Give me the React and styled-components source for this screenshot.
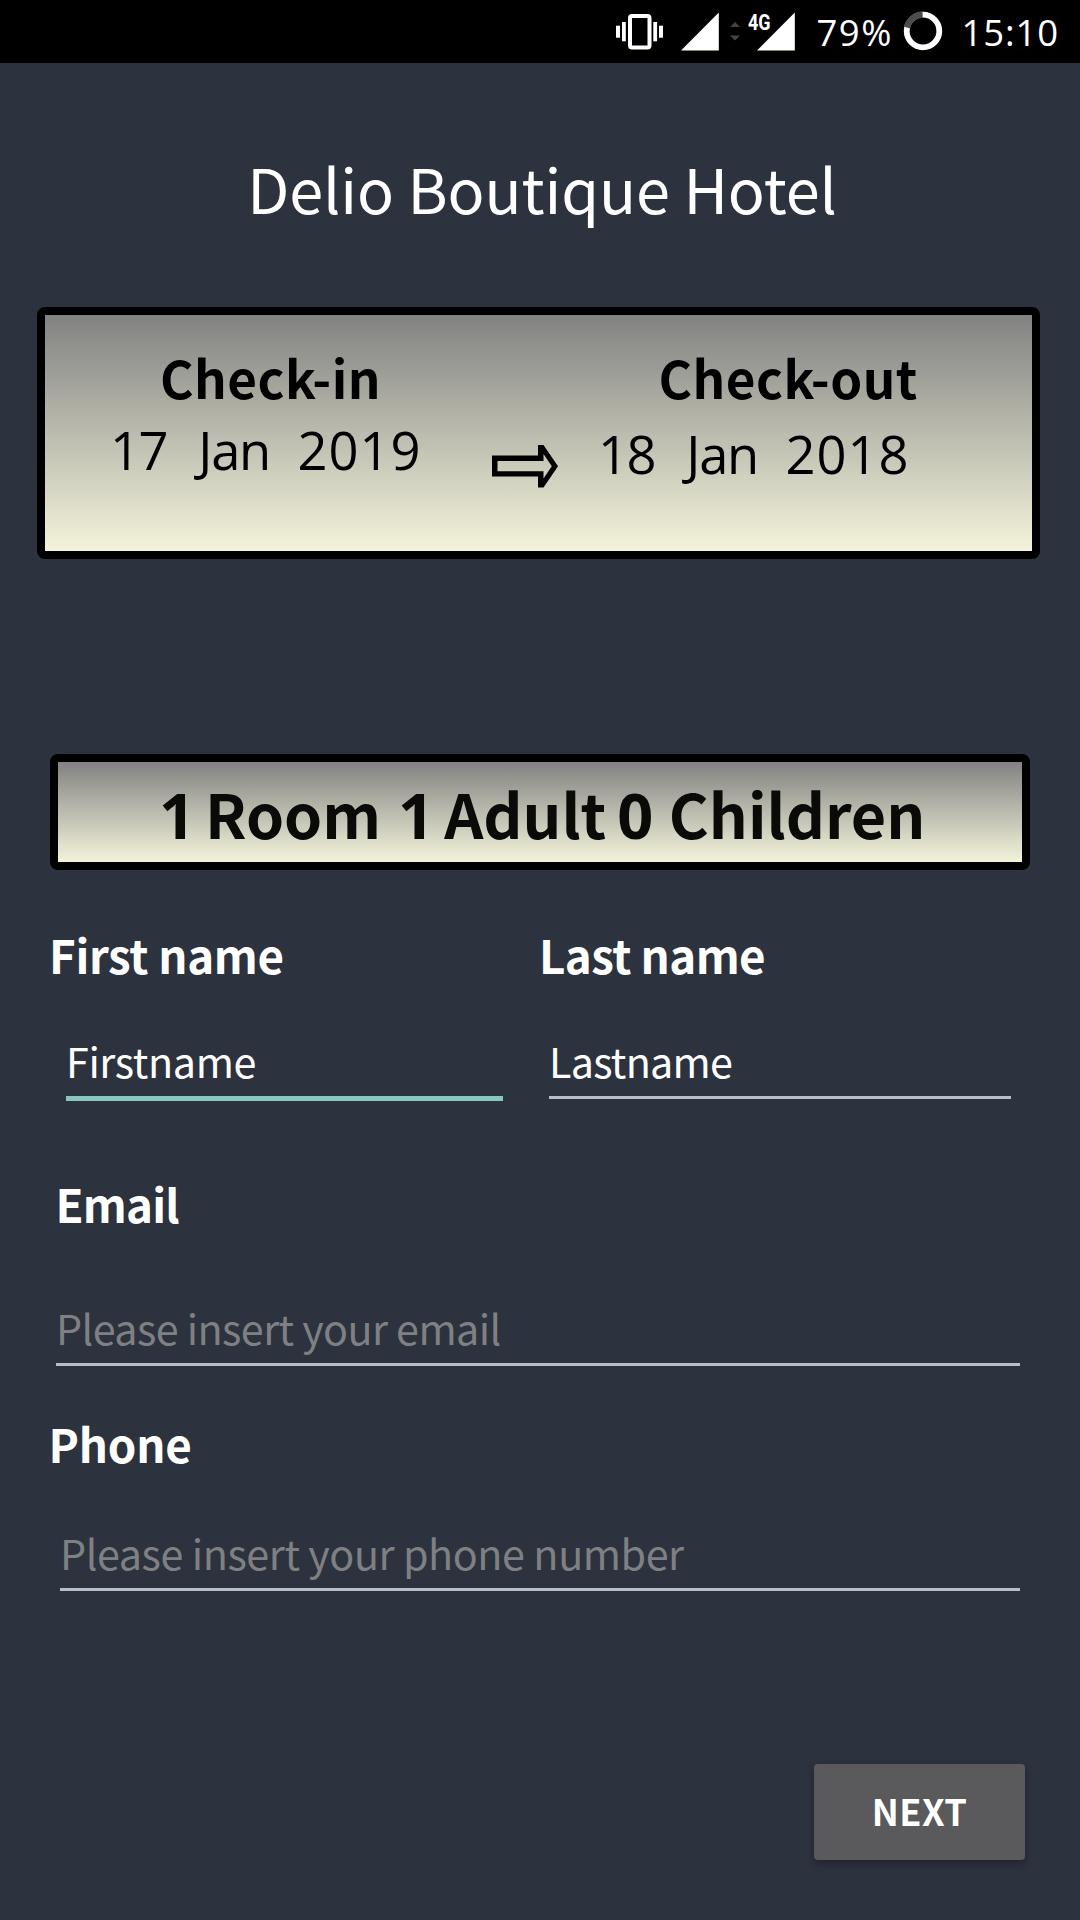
import React from "react";
import styled, { createGlobalStyle } from "styled-components";

const GlobalStyle = createGlobalStyle`
  *, *::before, *::after { box-sizing: border-box; }
  body { margin: 0; background: #2c323e; }
`;

const humanist = `"Noto Sans CJK SC", "Noto Sans", sans-serif`;
const open = `"Open Sans", "Noto Sans", sans-serif`;

const Screen = styled.div`
  display: flex;
  flex-direction: column;
  width: 1080px;
  height: 1920px;
  overflow: hidden;
  background: #2c323e;
  color: #fff;
  font-family: ${humanist};
  white-space: nowrap;
`;

const StatusBar = styled.div`
  display: flex;
  flex: none;
  height: 63px;
  padding-left: 616px;
  background: #000;
  svg { display: block; flex: none; }
`;

const StatusItem = styled.div`
  position: relative;
  margin-left: ${(p) => p.$gap}px;
`;

const NetworkType = styled.span`
  position: absolute;
  left: -9px;
  top: 8px;
  font: 700 22.5px/28px Roboto, sans-serif;
  transform: scaleX(0.8);
  transform-origin: left;
`;

const StatusText = styled.span`
  width: ${(p) => p.$width}px;
  margin-left: ${(p) => p.$gap}px;
  font: 400 36.5px/64px ${open};
  letter-spacing: ${(p) => p.$spacing}px;
`;

const Title = styled.h1`
  margin: 85px 0 0;
  padding-left: 4px;
  text-align: center;
  font-size: 61.2px;
  font-weight: 400;
  line-height: 80px;
  letter-spacing: -0.12px;
`;

const Panel = styled.section`
  display: flex;
  flex: none;
  border: 8px solid #000;
  border-radius: 8px;
  background: linear-gradient(#828282, #f4f4db) padding-box;
  color: #000;
`;

const StayPanel = styled(Panel)`
  width: 1003px;
  height: 252px;
  margin: 79px 0 0 37px;
  padding: 32px 0 0 65px;
`;

const StayColumn = styled.div`
  width: ${(p) => p.$width}px;
`;

const StayHeading = styled.h2`
  margin: 0 0 0 ${(p) => p.$indent}px;
  font-size: 51.2px;
  font-weight: 700;
  line-height: 60px;
  letter-spacing: 0.5px;
`;

const StayDate = styled.div`
  display: flex;
  margin-top: ${(p) => p.$gap}px;
  font: 400 52.5px/60px ${open};
`;

const Day = styled.span`
  letter-spacing: -1.6px;
`;

const Month = styled.span`
  margin: 0 27.5px 0 31.5px;
  letter-spacing: -1.3px;
`;

const Year = styled.span`
  letter-spacing: 1px;
`;

const ArrowSlot = styled.div`
  width: 106px;
  padding-top: 98px;
  svg { display: block; }
`;

const RoomsPanel = styled(Panel)`
  width: 980px;
  height: 116px;
  margin: 195px 0 0 50px;
  padding-left: 101px;
  color: #0a0a08;
  font-size: 61px;
  font-weight: 700;
  line-height: 100px;
`;

const Noun = styled.span`
  margin: 1px ${(p) => p.$after || 0}px 0 ${(p) => p.$before}px;
`;

const Count = styled.span`
  margin-top: 1px;
  font-family: "Noto Sans", sans-serif;
  font-size: 63px;
  line-height: 104px;
`;

const NameRow = styled.div`
  display: grid;
  grid-template-columns: 490px 1fr;
  margin: 56px 0 0 49px;
`;

const Group = styled.div`
  margin-top: ${(p) => p.$top || 0}px;
`;

const Label = styled.label`
  display: block;
  margin-left: ${(p) => p.$left || 0}px;
  font-size: 45.7px;
  font-weight: 700;
  line-height: 56px;
  letter-spacing: ${(p) => p.$spacing}px;
`;

const Field = styled.input`
  display: block;
  width: ${(p) => p.$width}px;
  height: ${(p) => (p.$active ? 72 : 70)}px;
  margin: ${(p) => p.$top}px 0 0 ${(p) => p.$left}px;
  padding: 0 0 5px;
  border: 0;
  border-bottom: ${(p) => (p.$active ? "5px solid #86c8bf" : "3px solid #b6bfca")};
  border-radius: 0;
  outline: 0;
  background: none;
  color: #fff;
  font: 400 41.3px/62px ${humanist};
  letter-spacing: ${(p) => p.$spacing}px;
  &::placeholder { color: #7f8082; opacity: 1; }
`;

const NextButton = styled.button`
  flex: none;
  width: 211px;
  height: 96px;
  margin: 173px 0 0 814px;
  padding: 0 0 3px;
  border: 0;
  border-radius: 4px;
  background: #5a5a5c;
  box-shadow: 0 4px 6px rgba(30, 24, 36, 0.55);
  color: #fff;
  font: 700 36.2px/93px ${humanist};
  letter-spacing: 0.4px;
`;

const VibrateIcon = () => (
  <svg width="47" height="63" fill="#fff">
    <rect x="14" y="16" width="19.5" height="31.5" rx="2" fill="none" stroke="#fff" strokeWidth="4" />
    <rect x="0" y="25.7" width="4" height="12" />
    <rect x="6" y="22" width="3.8" height="19.3" />
    <rect x="37.3" y="22" width="3.8" height="19.3" />
    <rect x="43" y="25.7" width="4" height="12" />
  </svg>
);

const SignalIcon = () => (
  <svg width="38" height="63">
    <path d="M0 50.5 L37.8 12.5 V50.5 Z" fill="#fff" />
  </svg>
);

const DataIcon = () => (
  <svg width="10" height="63" fill="#444">
    <path d="M0 27 L5 22 L10 27 Z M0 35.5 L5 40.5 L10 35.5 Z" />
  </svg>
);

const BatteryRing = () => (
  <svg width="40" height="63" fill="none">
    <circle cx="20" cy="31" r="16.3" stroke="#fff" strokeWidth="5.8" />
    <path d="M3.9 27.5 A16.3 16.3 0 0 1 19.6 14.7" stroke="#4c4c4c" strokeWidth="6.2" />
  </svg>
);

const ArrowIcon = () => (
  <svg width="66" height="43">
    <path
      fill="#000"
      fillRule="evenodd"
      d="M0 10.6 H46 V0 H51.5 L66 21.3 L51.5 42.6 H46 V31.6 H0 Z M5.5 16 V26.2 H51.5 V33.5 L59.8 21.3 L51.5 9 V16 Z"
    />
  </svg>
);

const App = () => (
  <Screen>
    <GlobalStyle />
    <StatusBar>
      <VibrateIcon />
      <StatusItem $gap={18}><SignalIcon /></StatusItem>
      <StatusItem $gap={11}><DataIcon /></StatusItem>
      <StatusItem $gap={17}>
        <SignalIcon />
        <NetworkType>4G</NetworkType>
      </StatusItem>
      <StatusText $gap={21.5} $width={77.5} $spacing={1.5}>79%</StatusText>
      <StatusItem $gap={9}><BatteryRing /></StatusItem>
      <StatusText $gap={18.5} $width={110} $spacing={0.9}>15:10</StatusText>
    </StatusBar>

    <Title>Delio Boutique Hotel</Title>

    <StayPanel>
      <StayColumn $width={382}>
        <StayHeading $indent={50}>Check-in</StayHeading>
        <StayDate $gap={13}><Day>17</Day><Month>Jan</Month><Year>2019</Year></StayDate>
      </StayColumn>
      <ArrowSlot><ArrowIcon /></ArrowSlot>
      <StayColumn $width={420}>
        <StayHeading $indent={60.5}>Check-out</StayHeading>
        <StayDate $gap={17}><Day>18</Day><Month>Jan</Month><Year>2018</Year></StayDate>
      </StayColumn>
    </StayPanel>

    <RoomsPanel>
      <Count>1</Count>
      <Noun $before={10} $after={17}>Room</Noun>
      <Count>1</Count>
      <Noun $before={10} $after={11}>Adult</Noun>
      <Count>0</Count>
      <Noun $before={15.5}>Children</Noun>
    </RoomsPanel>

    <NameRow>
      <Group>
        <Label $spacing={-0.35}>First name</Label>
        <Field $active $top={47} $left={17} $width={437} $spacing={-0.4} defaultValue="Firstname" />
      </Group>
      <Group>
        <Label $spacing={-0.6}>Last name</Label>
        <Field $top={47} $left={10} $width={462} $spacing={-0.75} defaultValue="Lastname" />
      </Group>
    </NameRow>

    <Group $top={74}>
      <Label $left={55.5} $spacing={-0.8}>Email</Label>
      <Field $top={65} $left={56} $width={964} $spacing={-0.58} placeholder="Please insert your email" />
    </Group>

    <Group $top={49}>
      <Label $left={48.5} $spacing={-0.2}>Phone</Label>
      <Field $top={50} $left={60} $width={960} $spacing={-0.43} placeholder="Please insert your phone number" />
    </Group>

    <NextButton>NEXT</NextButton>
  </Screen>
);

export default App;
